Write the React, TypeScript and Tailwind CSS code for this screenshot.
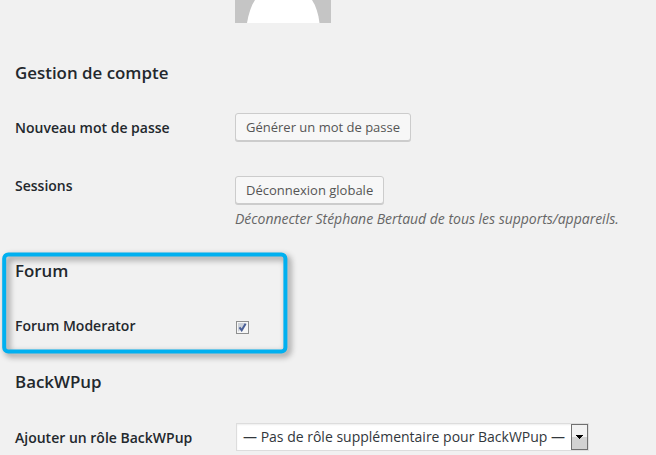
import type { ReactNode } from "react";

type RowProps = {
  label: string;
  labelClassName: string;
  className: string;
  children: ReactNode;
};

function SectionTitle({ children }: { children: ReactNode }) {
  return <h2 className="h-6 text-[16.9px] leading-6 font-semibold">{children}</h2>;
}

function Row({ label, labelClassName, className, children }: RowProps) {
  return (
    <div className={`flex items-start ${className}`}>
      <div className={`w-[220px] shrink-0 text-sm leading-5 font-semibold ${labelClassName}`}>{label}</div>
      <div>{children}</div>
    </div>
  );
}

function Button({ children }: { children: ReactNode }) {
  return (
    <button
      type="button"
      className="block h-7 rounded-[3px] border border-[#ccc] bg-[#f7f7f7] px-2.5 text-[13px] leading-[26px] whitespace-nowrap text-[#555] shadow-[0_1px_0_#ccc]"
    >
      {children}
    </button>
  );
}

function Checkbox() {
  return (
    <span role="checkbox" aria-checked="true" className="ml-px flex size-[13px] items-center justify-center border border-[#8e8f8f] bg-[#f6f6f6]">
      <svg width="9" height="9" viewBox="0 0 9 9" fill="none">
        <path d="M0 0h9L0 9z" fill="#cdd2da" />
        <path d="M1.500 4.300 3.700 7.300 7.600 0.800" stroke="#4a5f97" strokeWidth="2" />
      </svg>
    </span>
  );
}

function Select({ value }: { value: string }) {
  return (
    <div className="ml-px flex h-7 w-[353px] border border-[#ddd] bg-white shadow-[inset_0_1px_2px_rgba(0,0,0,0.07)]">
      <span className="flex-1 pl-1.5 text-sm leading-[26px] whitespace-nowrap text-[#32373c]">{value}</span>
      <span className="flex h-[26px] w-[17px] items-center justify-center border border-[#707070] bg-linear-to-b from-[#f2f2f2] from-50% to-[#d2d2d2] to-50%">
        <svg width="7" height="4" viewBox="0 0 7 4" shapeRendering="crispEdges">
          <path d="M0 0h7v1H6v1H5v1H4v1H3V3H2V2H1V1H0z" fill="#000" />
        </svg>
      </span>
    </div>
  );
}

export default function App() {
  return (
    <div className="h-[455px] w-[656px] overflow-hidden bg-[#f1f1f1] pl-[15px] font-['Open_Sans',sans-serif] text-[#23282d]">
      <div className="ml-[220px] h-[23px] w-24 overflow-hidden bg-[#c5c5c5]">
        <svg width="96" height="23" viewBox="0 0 96 23">
          <path d="M12 23C13.5 14 16 6 20 0H77C81 6 83.500 14 84.500 23z" fill="#fff" />
        </svg>
      </div>

      <section className="pt-[38px]">
        <SectionTitle>Gestion de compte</SectionTitle>
        <Row label="Nouveau mot de passe" labelClassName="pt-[5px]" className="mt-7 h-[63px]">
          <Button>Générer un mot de passe</Button>
        </Row>
        <Row label="Sessions" labelClassName="" className="h-[83px]">
          <Button>Déconnexion globale</Button>
          <p className="mt-[5px] text-sm leading-5 tracking-[-0.02px] whitespace-nowrap text-[#666] italic">
            Déconnecter Stéphane Bertaud de tous les supports/appareils.
          </p>
        </Row>
      </section>

      <section className="relative h-[111px]">
        <SectionTitle>Forum</SectionTitle>
        <Row label="Forum Moderator" labelClassName="" className="mt-[33px]">
          <div className="pt-[5px]">
            <Checkbox />
          </div>
        </Row>
        {/* highlight frame around the forum settings */}
        <svg
          className="pointer-events-none absolute -top-[9px] -left-[15px] drop-shadow-[3px_3px_3px_rgba(0,0,0,0.45)]"
          width="300"
          height="116"
          viewBox="0 0 300 116"
          fill="none"
        >
          <rect x="4.200" y="4.500" width="281.200" height="97" rx="4" stroke="#00b0f0" strokeWidth="4" />
        </svg>
      </section>

      <section>
        <SectionTitle>BackWPup</SectionTitle>
        <Row label="Ajouter un rôle BackWPup" labelClassName="pt-[5px]" className="mt-[29px]">
          <Select value="— Pas de rôle supplémentaire pour BackWPup —" />
        </Row>
      </section>
    </div>
  );
}
